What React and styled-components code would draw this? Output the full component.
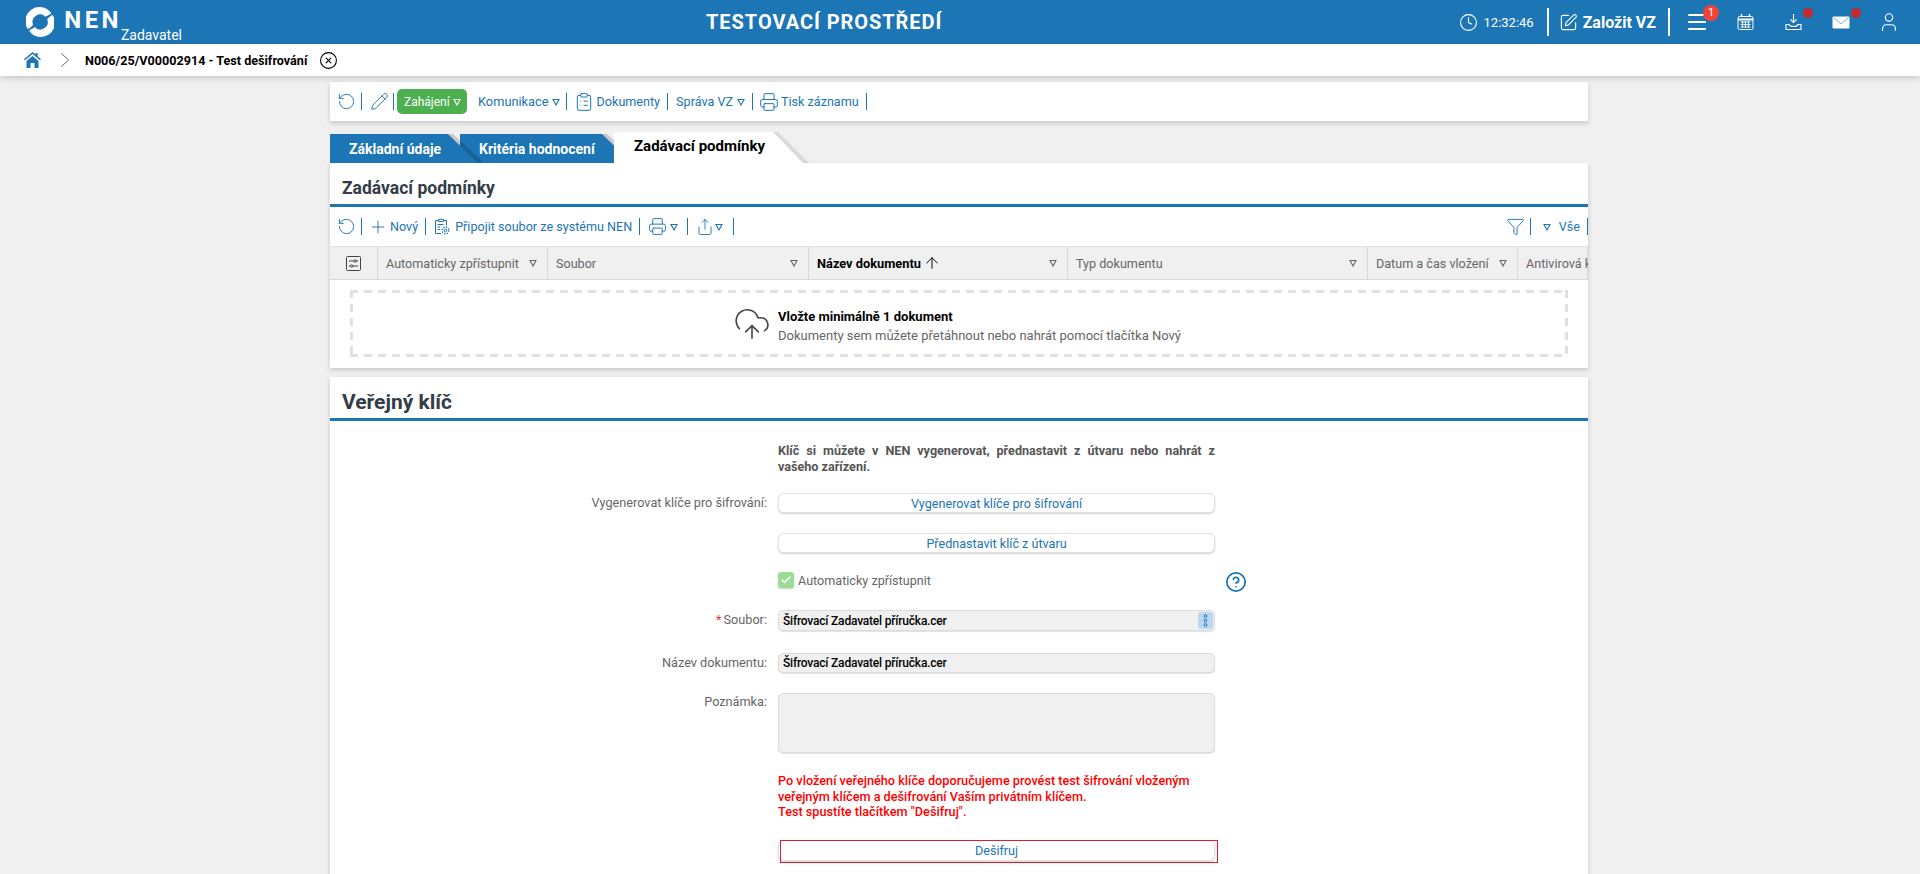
import React from 'react'
import styled, { createGlobalStyle } from 'styled-components'
import {
  Clock, SquarePen, Menu, User, RotateCcw, Pencil, ClipboardList, Printer, Plus, Share,
  Funnel, CloudUpload, CircleHelp, CircleX, ArrowUp, Check,
} from 'lucide-react'

const blue = '#1c75b4'

const Global = createGlobalStyle`
  html, body { margin: 0; padding: 0; height: 100%; overflow: hidden; background: #f0f0f0; }
  body { font-family: Roboto, "Liberation Sans", sans-serif; font-size: 12.6px; color: #666; }
  * { box-sizing: border-box; }
`

const Header = styled.header`
  height: 44px;
  background: ${blue};
  color: #fff;
  display: flex;
  align-items: center;
  padding: 0 7px 0 26px;
`
const LogoWrap = styled.div`
  display: flex;
  width: 156px;
  height: 44px;
  align-items: flex-start;
  padding-top: 6px;
`
const Nen = styled.span`
  font-size: 24px;
  font-weight: 700;
  letter-spacing: 3.4px;
  line-height: 28px;
  margin-left: 10px;
`
const Zadavatel = styled.span`
  font-size: 14px;
  line-height: 16px;
  margin: 21px 0 0 -1px;
`
const EnvTitle = styled.div`
  margin-left: 524px;
  font-size: 20px;
  font-weight: 700;
  letter-spacing: 0.95px;
  white-space: nowrap;
`
const HeaderRight = styled.div`
  margin-left: auto;
  display: flex;
  align-items: center;
`
const Time = styled.span`
  font-size: 13px;
  margin: 0 13px 0 6px;
`
const HeaderSep = styled.span`
  width: 2px;
  height: 28px;
  background: #fff;
`
const Create = styled.span`
  display: flex;
  align-items: center;
  gap: 5px;
  margin: 0 12px 0 10px;
  font-size: 16px;
  font-weight: 700;
`
const IconCell = styled.span`
  position: relative;
  width: 48px;
  height: 44px;
  margin-left: ${p => p.$ml ?? 0}px;
  display: flex;
  align-items: center;
  justify-content: center;
`
const Count = styled.span`
  position: absolute;
  left: 30px;
  top: 5px;
  width: 16px;
  height: 16px;
  border-radius: 50%;
  background: #f44336;
  font-size: 11px;
  line-height: 16px;
  text-align: center;
`
const Dot = styled.span`
  position: absolute;
  left: 34px;
  top: 8px;
  width: 10px;
  height: 10px;
  border-radius: 50%;
  background: #c62828;
`

const Crumbs = styled.nav`
  height: 32px;
  background: #fff;
  box-shadow: 0 2px 6px rgba(0, 0, 0, 0.18);
  display: flex;
  align-items: center;
  padding-left: 24px;
  color: #000;
  position: relative;
`
const CrumbTitle = styled.span`
  margin: 0 12px 0 16px;
  font-size: 12.6px;
  font-weight: 700;
`

const Main = styled.main`
  width: 1258px;
  margin-left: 330px;
  padding-top: 6px;
`
const Card = styled.section`
  background: #fff;
  box-shadow: 0 2px 5px rgba(0, 0, 0, 0.18);
`
const TopBar = styled(Card)`
  height: 39px;
  display: flex;
  align-items: center;
  padding-left: 7px;
  color: ${blue};
`
const Sep = styled.span`
  width: 1px;
  height: 17px;
  background: ${blue};
  margin: 0 ${p => p.$r ?? 8}px 0 ${p => p.$l ?? 7}px;
`
const ToolLink = styled.span`
  display: flex;
  align-items: center;
  gap: ${p => p.$gap ?? 2}px;
  font-size: ${p => p.$size ?? 12.6}px;
  color: ${blue};
  white-space: nowrap;
`
const GreenBtn = styled.span`
  display: flex;
  align-items: center;
  gap: 3px;
  height: 25px;
  width: 70px;
  padding-left: 7px;
  margin: 0 11px 0 3px;
  border-radius: 5px;
  background: #4caf50;
  color: #fff;
  font-size: 12px;
`
const Tabs = styled.div`
  display: flex;
  align-items: flex-end;
  height: 31px;
  margin-top: 11px;
`
const Tab = styled.div`
  position: relative;
  z-index: ${p => p.$z};
  width: ${p => p.$w}px;
  height: ${p => (p.$active ? 31 : 29)}px;
  margin-left: ${p => p.$ml ?? 0}px;
  padding-left: ${p => (p.$active ? 20 : 19)}px;
  background: ${p => (p.$active ? '#fff' : blue)};
  color: ${p => (p.$active ? '#000' : '#fff')};
  font-size: ${p => (p.$active ? 15 : 14)}px;
  font-weight: 700;
  line-height: ${p => (p.$active ? 29 : 30)}px;
  white-space: nowrap;
  &::after {
    content: '';
    position: absolute;
    left: 100%;
    top: 0;
    width: 30px;
    height: 100%;
    background: ${p => (p.$active ? '#fff' : blue)};
    clip-path: polygon(0 0, 100% 100%, 0 100%);
  }
  &::before {
    content: '';
    position: absolute;
    left: 100%;
    top: 0;
    width: 36px;
    height: 100%;
    z-index: 1;
    background: rgba(0, 0, 0, ${p => (p.$active ? 0.09 : 0.16)});
    clip-path: polygon(0 0, 5px 0, 100% 100%, calc(100% - 6px) 100%);
  }
`
const PanelTitle = styled.h2`
  margin: 0;
  height: 44px;
  padding-left: 12px;
  border-bottom: 3px solid ${blue};
  color: #333d47;
  font-size: ${p => p.$size}px;
  font-weight: 700;
  line-height: 51px;
`
const GridBar = styled.div`
  height: 39px;
  display: flex;
  align-items: center;
  padding-left: 7px;
`
const BarEnd = styled.div`
  margin-left: auto;
  display: flex;
  align-items: center;
`
const HeadRow = styled.div`
  display: grid;
  grid-template-columns: 48px 170px 261px 259px 300px 150px 70px;
  height: 34px;
  background: #f0f0f0;
  border-top: 1px solid #e2e2e2;
  border-bottom: 1px solid #d8d8d8;
  overflow: hidden;
`
const HeadCell = styled.div`
  display: flex;
  align-items: center;
  justify-content: ${p => (p.$center ? 'center' : 'space-between')};
  padding: 0 ${p => (p.$center ? 0 : 10)}px 0 ${p => (p.$center ? 0 : 8)}px;
  border-right: 1px solid #d8d8d8;
  color: ${p => (p.$sorted ? '#000' : '#666')};
  font-weight: ${p => (p.$sorted ? 700 : 400)};
  white-space: nowrap;
`
const SortLabel = styled.span`
  display: flex;
  align-items: center;
  gap: 2px;
  font-size: 12.8px;
`
const DropArea = styled.div`
  padding: 10px 20px 11px;
  height: 88px;
`
const dash = '#e0e0e0 0 8px, transparent 8px 14px'
const DropBox = styled.div`
  height: 67px;
  padding-right: 4px;
  background:
    repeating-linear-gradient(90deg, ${dash}) top / 100% 3px no-repeat,
    repeating-linear-gradient(90deg, ${dash}) bottom / 100% 3px no-repeat,
    repeating-linear-gradient(180deg, ${dash}) left / 3px 100% no-repeat,
    repeating-linear-gradient(180deg, ${dash}) right / 3px 100% no-repeat;
  display: flex;
  align-items: center;
  justify-content: center;
  gap: 7px;
`
const DropText = styled.div`
  font-size: 13px;
  line-height: 19px;
  padding-top: 4px;
`
const DropStrong = styled.div`
  color: #000;
  font-weight: 700;
`
const KeyPanel = styled(Card)`
  margin-top: 9px;
  padding-bottom: 60px;
`
const Row = styled.div`
  display: grid;
  grid-template-columns: 437px 437px auto;
  column-gap: 11px;
  margin-top: ${p => p.$mt}px;
`
const Label = styled.label`
  text-align: right;
  font-size: 12.7px;
  line-height: ${p => p.$lh ?? 20}px;
  white-space: nowrap;
`
const Req = styled.span`
  color: #e53935;
  margin-right: 2px;
`
const Note = styled.div`
  font-size: 12.6px;
  font-weight: 700;
  line-height: 16px;
  color: #555;
  text-align: justify;
`
const Btn = styled.button`
  display: block;
  width: 100%;
  height: ${p => p.$h ?? 20}px;
  padding: 0;
  border: 1px solid #e2e2e2;
  border-radius: 6px;
  background: #fff;
  box-shadow: 0 1px 2px rgba(0, 0, 0, 0.2);
  font: 12.6px Roboto, sans-serif;
  color: ${blue};
`
const Decrypt = styled.div`
  position: relative;
  &::after {
    content: '';
    position: absolute;
    left: 2px;
    top: 0;
    width: calc(100% - 1px);
    height: 100%;
    border: 1px solid #e21c2a;
    pointer-events: none;
  }
`
const CheckLine = styled.div`
  display: flex;
  align-items: center;
  gap: 4px;
  height: 16px;
`
const CheckBox = styled.span`
  width: 16px;
  height: 16px;
  border-radius: 3px;
  background: #9ddc96;
  color: #fff;
  display: flex;
  align-items: center;
  justify-content: center;
  box-shadow: 0 1px 2px rgba(0, 0, 0, 0.2);
`
const HelpIcon = styled.span`
  display: flex;
  align-self: start;
  height: 16px;
  margin: -1px 0 0 -1px;
  color: ${blue};
`
const Field = styled.div`
  position: relative;
  height: ${p => p.$h}px;
  padding-left: 4px;
  border: 1px solid #dcdcdc;
  border-radius: 5px;
  background: #f0f0f0;
  box-shadow: 0 1px 1px rgba(0, 0, 0, 0.12);
  color: #000;
  font-size: 12px;
  font-weight: 500;
  letter-spacing: -0.2px;
  line-height: ${p => p.$h - 1}px;
`
const FieldMenu = styled.span`
  position: absolute;
  right: 1px;
  top: 1px;
  width: 15px;
  height: 17px;
  border-radius: 3px;
  background: #bcd7f0;
  display: flex;
  align-items: center;
  justify-content: center;
`
const Warning = styled.div`
  color: #f00;
  font-size: 12.7px;
  font-weight: 500;
  line-height: 15.5px;
`

function Tri({ color = blue, size = 8 }) {
  return (
    <svg width={size} height={size} viewBox="0 0 8 8" fill="none" stroke={color} strokeWidth="1.1">
      <path d="M1 1.500h6L4 7z" />
    </svg>
  )
}

function Logo() {
  const arc = 'M2 24A16 16 0 0 1 28.500 6C26 8 24 9 22 10A8.500 8.500 0 0 0 8 19C6.500 21 4.500 23 2 24Z'
  return (
    <svg width="32" height="32" viewBox="0 0 32 32" fill="#fff">
      <path d={arc} />
      <path d={arc} transform="rotate(180 16 16)" />
    </svg>
  )
}

function House() {
  return (
    <svg width="17" height="16" viewBox="0 0 17 16" fill={blue}>
      <path d="M8.500 0 0 7.200l1 1.100L8.500 2l7.500 6.300 1-1.100L13.600 4.300V1h-2v1.600z" />
      <path d="M2.500 9 8.500 4l6 5v7h-4v-5h-4v5h-4z" />
    </svg>
  )
}

function Chevron() {
  return (
    <svg width="8" height="14" viewBox="0 0 8 14" fill="none" stroke="#666" style={{ marginLeft: 20 }}>
      <path d="M.5.500 7.500 7 .5 13.500" />
    </svg>
  )
}

function CalendarIcon() {
  return (
    <svg width="17" height="16" viewBox="0 0 17 16" fill="none" stroke="#fff">
      <rect x="1" y="2.500" width="15" height="13" rx="1.500" />
      <path d="M1 5.500h15" strokeWidth="2" />
      <path d="M4.500 0v3M12.500 0v3" strokeWidth="1.500" />
      <path d="M3.500 8h10M3.500 10.500h10M3.500 13h10M5.500 7v7M8.500 7v7M11.500 7v7" strokeWidth=".9" />
    </svg>
  )
}

function TrayDownload() {
  return (
    <svg width="17" height="16" viewBox="0 0 17 16" fill="none" stroke="#fff" strokeWidth="1.100">
      <path d="M8.500 0v8M5.500 5.500l3 3 3-3" />
      <path d="M1 10.500h3c.5 1.500 2 2 4.500 2s4-.5 4.500-2h3v5H1z" />
    </svg>
  )
}

function MailIcon() {
  return (
    <svg width="18" height="13" viewBox="0 0 18 13">
      <rect width="17" height="12" x=".5" y=".5" rx="1" fill="#fff" />
      <path d="M1.500 1.500 9 8l7.500-6.500" fill="none" stroke="#7fb4da" strokeWidth="1" />
    </svg>
  )
}

function SettingsBox() {
  return (
    <svg width="15" height="15" viewBox="0 0 15 15" fill="none" stroke="#444">
      <rect x=".5" y=".5" width="14" height="14" rx="1" />
      <path d="M3 5h5M10.500 5H12M3 10h1.500M7 10h5" />
      <circle cx="9.200" cy="5" r="1.200" />
      <circle cx="5.700" cy="10" r="1.200" />
    </svg>
  )
}

function ClipboardGear() {
  return (
    <svg width="16" height="17" viewBox="0 0 16 17" fill="none" stroke={blue}>
      <path d="M7 15.500H1.500v-13h3M9.500 2.500h3v5" />
      <path d="M4.500 3.500v-2h1.500a1.500 1.500 0 0 1 2 0h1.500v2z" />
      <path d="M3.500 6.500h6M3.500 9h2.500M3.500 11.500h2.500" />
      <circle cx="11.500" cy="12.500" r="1.300" />
      <circle cx="11.500" cy="12.500" r="3.300" strokeWidth="1.400" strokeDasharray="1.300 1.300" />
    </svg>
  )
}

function KebabRings() {
  return (
    <svg width="5" height="13" viewBox="0 0 5 13" fill="none" stroke={blue}>
      <circle cx="2.500" cy="2" r="1.400" />
      <circle cx="2.500" cy="6.500" r="1.400" />
      <circle cx="2.500" cy="11" r="1.400" />
    </svg>
  )
}

const columns = [
  { name: 'Automaticky zpřístupnit' },
  { name: 'Soubor' },
  { name: 'Název dokumentu', sorted: true },
  { name: 'Typ dokumentu' },
  { name: 'Datum a čas vložení' },
  { name: 'Antivirová kontrola' },
]

export default function App() {
  return (
    <>
      <Global />
      <Header>
        <LogoWrap>
          <Logo />
          <Nen>NEN</Nen>
          <Zadavatel>Zadavatel</Zadavatel>
        </LogoWrap>
        <EnvTitle>TESTOVACÍ PROSTŘEDÍ</EnvTitle>
        <HeaderRight>
          <Clock size={19} strokeWidth={1.4} />
          <Time>12:32:46</Time>
          <HeaderSep />
          <Create><SquarePen size={19} strokeWidth={1.4} />Založit VZ</Create>
          <HeaderSep />
          <IconCell $ml={3}>
            <Menu size={24} strokeWidth={2} />
            <Count>1</Count>
          </IconCell>
          <IconCell><CalendarIcon /></IconCell>
          <IconCell><TrayDownload /><Dot /></IconCell>
          <IconCell><MailIcon /><Dot /></IconCell>
          <IconCell><User size={22} strokeWidth={1.3} /></IconCell>
        </HeaderRight>
      </Header>
      <Crumbs>
        <House />
        <Chevron />
        <CrumbTitle>N006/25/V00002914 - Test dešifrování</CrumbTitle>
        <CircleX size={19} strokeWidth={1.4} color="#000" />
      </Crumbs>
      <Main>
        <TopBar>
          <RotateCcw size={19} strokeWidth={1.2} />
          <Sep $l={5} />
          <Pencil size={19} strokeWidth={1.2} />
          <Sep $l={4} $r={0} />
          <GreenBtn>Zahájení <Tri color="#fff" /></GreenBtn>
          <ToolLink $size={12.8} $gap={3}>Komunikace <Tri /></ToolLink>
          <Sep $l={6} $r={7} />
          <ToolLink $gap={3}><ClipboardList size={20} strokeWidth={1.2} />Dokumenty</ToolLink>
          <Sep />
          <ToolLink $gap={4}>Správa VZ <Tri /></ToolLink>
          <Sep $r={6} />
          <ToolLink><Printer size={20} strokeWidth={1.2} />Tisk záznamu</ToolLink>
          <Sep />
        </TopBar>
        <Tabs>
          <Tab $w={118} $z={3}>Základní údaje</Tab>
          <Tab $w={142} $ml={12} $z={2}>Kritéria hodnocení</Tab>
          <Tab $w={159} $ml={12} $z={4} $active>Zadávací podmínky</Tab>
        </Tabs>
        <Card>
          <PanelTitle $size={17.5}>Zadávací podmínky</PanelTitle>
          <GridBar>
            <RotateCcw size={19} strokeWidth={1.2} color={blue} />
            <Sep $l={5} $r={6} />
            <ToolLink><Plus size={20} strokeWidth={1.1} />Nový</ToolLink>
            <Sep />
            <ToolLink $gap={5}><ClipboardGear />Připojit soubor ze systému NEN</ToolLink>
            <Sep />
            <ToolLink $gap={3}><Printer size={19} strokeWidth={1.2} /><Tri /></ToolLink>
            <Sep $l={9} />
            <ToolLink $gap={1}><Share size={18} strokeWidth={1.2} /><Tri /></ToolLink>
            <Sep $l={10} />
            <BarEnd>
              <Funnel size={19} strokeWidth={1.2} color={blue} />
              <Sep $l={5} $r={12} />
              <ToolLink $gap={8}><Tri />Vše</ToolLink>
              <Sep $r={0} />
            </BarEnd>
          </GridBar>
          <HeadRow>
            <HeadCell $center><SettingsBox /></HeadCell>
            {columns.map(c => (
              <HeadCell key={c.name} $sorted={c.sorted}>
                {c.sorted
                  ? <SortLabel>{c.name} <ArrowUp size={18} strokeWidth={1.3} /></SortLabel>
                  : c.name}
                <Tri color="#666" />
              </HeadCell>
            ))}
          </HeadRow>
          <DropArea>
            <DropBox>
              <CloudUpload size={38} strokeWidth={1} color="#444" />
              <DropText>
                <DropStrong>Vložte minimálně 1 dokument</DropStrong>
                Dokumenty sem můžete přetáhnout nebo nahrát pomocí tlačítka Nový
              </DropText>
            </DropBox>
          </DropArea>
        </Card>
        <KeyPanel>
          <PanelTitle $size={21}>Veřejný klíč</PanelTitle>
          <Row $mt={22}>
            <span />
            <Note>Klíč si můžete v NEN vygenerovat, přednastavit z útvaru nebo nahrát z vašeho zařízení.</Note>
          </Row>
          <Row $mt={18}>
            <Label>Vygenerovat klíče pro šifrování:</Label>
            <Btn>Vygenerovat klíče pro šifrování</Btn>
          </Row>
          <Row $mt={20}>
            <span />
            <Btn>Přednastavit klíč z útvaru</Btn>
          </Row>
          <Row $mt={19}>
            <span />
            <CheckLine>
              <CheckBox><Check size={12} strokeWidth={3} /></CheckBox>
              Automaticky zpřístupnit
            </CheckLine>
            <HelpIcon><CircleHelp size={22} strokeWidth={1.9} /></HelpIcon>
          </Row>
          <Row $mt={22}>
            <Label><Req>*</Req>Soubor:</Label>
            <Field $h={21}>
              Šifrovací Zadavatel příručka.cer
              <FieldMenu><KebabRings /></FieldMenu>
            </Field>
          </Row>
          <Row $mt={22}>
            <Label>Název dokumentu:</Label>
            <Field $h={20}>Šifrovací Zadavatel příručka.cer</Field>
          </Row>
          <Row $mt={20}>
            <Label $lh={17}>Poznámka:</Label>
            <Field $h={60} />
          </Row>
          <Row $mt={20}>
            <span />
            <Warning>
              Po vložení veřejného klíče doporučujeme provést test šifrování vloženým veřejným klíčem a dešifrování Vaším privátním klíčem.
              <br />
              Test spustíte tlačítkem "Dešifruj".
            </Warning>
          </Row>
          <Row $mt={20}>
            <span />
            <Decrypt><Btn $h={21}>Dešifruj</Btn></Decrypt>
          </Row>
        </KeyPanel>
      </Main>
    </>
  )
}
